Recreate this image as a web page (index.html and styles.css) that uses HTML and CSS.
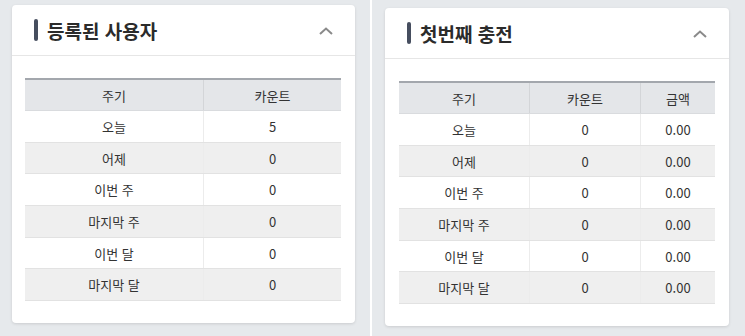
FILE: index.html
```html
<!DOCTYPE html>
<html lang="ko">
<head>
<meta charset="utf-8">
<link rel="stylesheet" href="styles.css">
</head>
<body>
<div class="page">
  <div class="col col-left">
    <section class="card">
      <header class="card-head">
        <span class="bar"></span>
        <h2 class="title">등록된 사용자</h2>
        <svg class="chev" width="14" height="8" viewBox="0 0 14 8"><path d="M1 7 L7 1.5 L13 7" fill="none" stroke="#8a8a8a" stroke-width="2"/></svg>
      </header>
      <div class="card-body">
        <table class="tbl tbl-2">
          <thead><tr><th>주기</th><th>카운트</th></tr></thead>
          <tbody>
            <tr><td>오늘</td><td>5</td></tr>
            <tr><td>어제</td><td>0</td></tr>
            <tr><td>이번 주</td><td>0</td></tr>
            <tr><td>마지막 주</td><td>0</td></tr>
            <tr><td>이번 달</td><td>0</td></tr>
            <tr><td>마지막 달</td><td>0</td></tr>
          </tbody>
        </table>
      </div>
    </section>
  </div>
  <div class="divider"></div>
  <div class="col col-right">
    <section class="card">
      <header class="card-head">
        <span class="bar"></span>
        <h2 class="title">첫번째 충전</h2>
        <svg class="chev" width="14" height="8" viewBox="0 0 14 8"><path d="M1 7 L7 1.5 L13 7" fill="none" stroke="#8a8a8a" stroke-width="2"/></svg>
      </header>
      <div class="card-body">
        <table class="tbl tbl-3">
          <thead><tr><th>주기</th><th>카운트</th><th>금액</th></tr></thead>
          <tbody>
            <tr><td>오늘</td><td>0</td><td>0.00</td></tr>
            <tr><td>어제</td><td>0</td><td>0.00</td></tr>
            <tr><td>이번 주</td><td>0</td><td>0.00</td></tr>
            <tr><td>마지막 주</td><td>0</td><td>0.00</td></tr>
            <tr><td>이번 달</td><td>0</td><td>0.00</td></tr>
            <tr><td>마지막 달</td><td>0</td><td>0.00</td></tr>
          </tbody>
        </table>
      </div>
    </section>
  </div>
</div>
</body>
</html>
```

FILE: styles.css
```css
html, body {
  margin: 0;
  padding: 0;
  background: #e6e9ec;
  font-family: "Noto Sans CJK KR", "Noto Sans", sans-serif;
  color: #333;
}
.page {
  display: flex;
  width: 745px;
  height: 336px;
}
.col { box-sizing: border-box; }
.col-left {
  width: 370px;
  padding: 5px 15px 0 12px;
}
.col-right {
  flex: 1;
  padding: 8px 16px 0 13px;
}
.divider {
  width: 2px;
  background: #ffffff;
}
.card {
  background: #fff;
  border-radius: 4px;
  box-shadow: 0 1px 3px rgba(0,0,0,0.12);
}
.card-head {
  display: flex;
  align-items: center;
  height: 50px;
  padding: 0 22px 0 22px;
  border-bottom: 1px solid #e6e6e6;
}
.bar {
  width: 4px;
  height: 22px;
  border-radius: 2px;
  background: #464e5f;
  margin-right: 9px;
}
.title {
  margin: 0;
  font-size: 19px;
  font-weight: 700;
  color: #2b2b2b;
  flex: 1;
  line-height: 1;
}
.chev { display: block; margin-top: 2px; }
.card-body {
  padding: 22px 14px 22px 13px;
}
.col-right .card-body { padding: 22px 14px 22px 14px; }
.tbl {
  width: 100%;
  border-collapse: collapse;
  table-layout: fixed;
  font-size: 13px;
  border-top: 2px solid #a3a7ad;
}
.tbl th {
  background: #e4e6e9;
  font-weight: 400;
  height: 30px;
  padding: 0;
  border-bottom: 1px solid #d9dbde;
  border-left: 1px solid #d3d5d8;
}
.tbl td {
  height: 30.7px;
  padding: 0;
  text-align: center;
  border-bottom: 1px solid #e2e2e2;
  border-left: 1px solid #ececec;
}
.tbl th:first-child, .tbl td:first-child { border-left: none; }
.tbl tbody tr:nth-child(even) td { background: #efefef; }
.tbl-2 th:first-child { width: 178px; }
.tbl-3 th:first-child { width: 130px; }
.tbl-3 th:nth-child(2) { width: 110px; }
```
